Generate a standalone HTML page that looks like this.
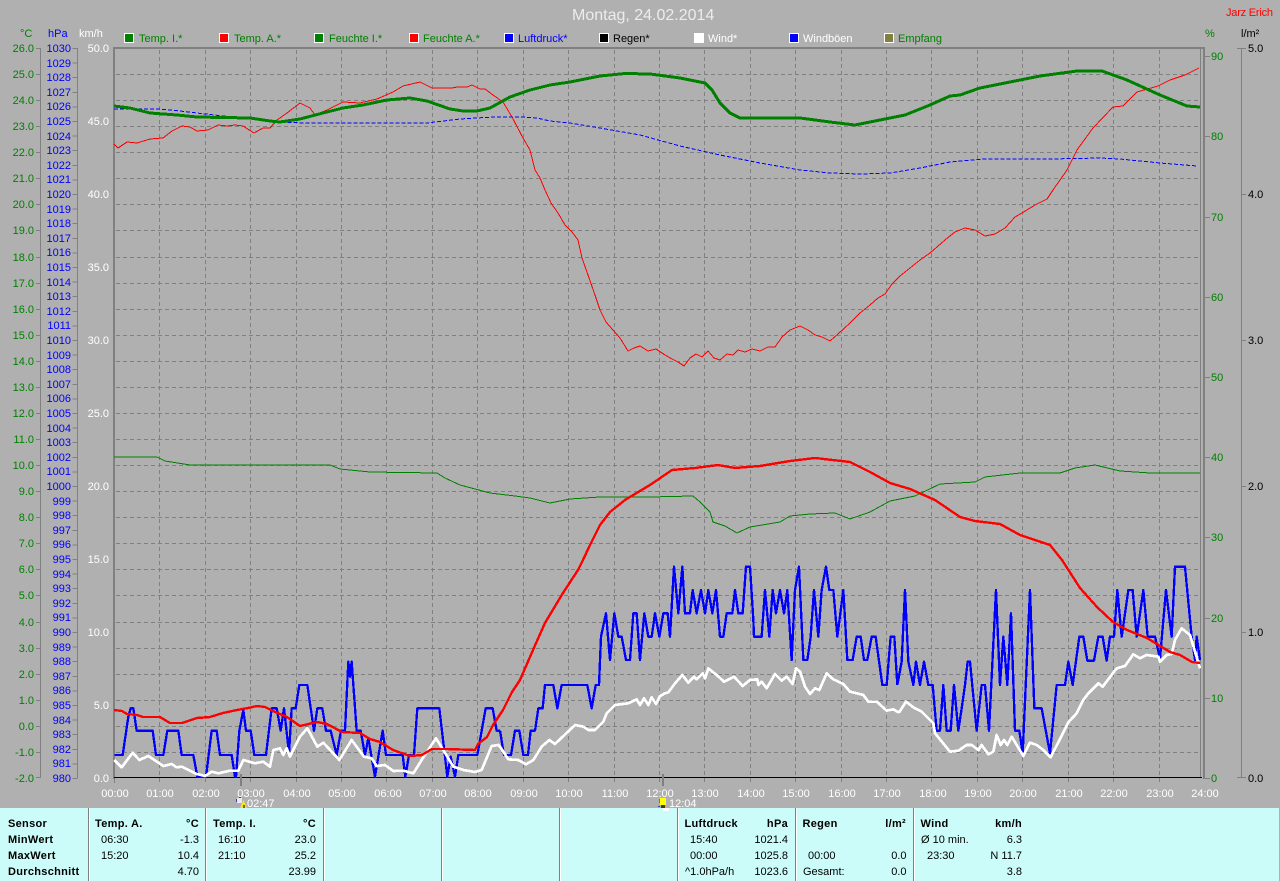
<!DOCTYPE html>
<html><head><meta charset="utf-8"><title>Wetter</title>
<style>
html,body{margin:0;padding:0;background:#b0b0b0;width:1280px;height:881px;overflow:hidden}
svg{display:block;position:absolute;left:0;top:0}
text{font-family:"Liberation Sans",Arial,sans-serif;font-size:11px}
.c{shape-rendering:crispEdges;fill:none}
.e{text-anchor:end}.m{text-anchor:middle}
.g{fill:#008000}.b{fill:#0000ff}.w{fill:#fff}.k{fill:#000}
.h{font-weight:bold;letter-spacing:.3px}
</style></head><body>
<svg width="1280" height="881" viewBox="0 0 1280 881" xmlns="http://www.w3.org/2000/svg">
<rect width="1280" height="881" fill="#b0b0b0"/>

<!-- grid -->
<path class="c" stroke="#808080" stroke-width="1" stroke-dasharray="4 3" d="M116 74.5H1200M116 100.5H1200M116 126.5H1200M116 152.5H1200M116 178.5H1200M116 204.5H1200M116 230.5H1200M116 257.5H1200M116 283.5H1200M116 309.5H1200M116 335.5H1200M116 361.5H1200M116 387.5H1200M116 413.5H1200M116 439.5H1200M116 465.5H1200M116 491.5H1200M116 517.5H1200M116 543.5H1200M116 569.5H1200M116 595.5H1200M116 622.5H1200M116 648.5H1200M116 674.5H1200M116 700.5H1200M116 726.5H1200M116 752.5H1200"/>
<path class="c" stroke="#808080" stroke-width="1" stroke-dasharray="4 3" d="M159.5 50V783M205.5 50V783M250.5 50V783M296.5 50V783M341.5 50V783M386.5 50V783M432.5 50V783M477.5 50V783M523.5 50V783M568.5 50V783M614.5 50V783M659.5 50V783M704.5 50V783M750.5 50V783M795.5 50V783M841.5 50V783M886.5 50V783M931.5 50V783M977.5 50V783M1022.5 50V783M1068.5 50V783M1113.5 50V783M1159.5 50V783"/>

<!-- frame -->
<path class="c" stroke="#808080" stroke-width="2" d="M113 48H1205M114 47V779M1204 47V779"/>
<path class="c" stroke="#808080" stroke-width="1" d="M1200.5 49V778M114.5 778V783"/>
<path class="c" stroke="#000" stroke-width="1" d="M114 777.5H1202"/>
<path class="c" stroke="#808080" stroke-width="2" d="M241 774V786M663 774V786"/>

<!-- left axes -->
<path class="c" stroke="#808080" stroke-width="1" d="M40.5 48V778M77.5 48V778M1241.5 48V778"/>
<path class="c" stroke="#808080" stroke-width="1" d="M36 48.5H41M36 74.5H41M36 100.5H41M36 126.5H41M36 152.5H41M36 178.5H41M36 204.5H41M36 230.5H41M36 257.5H41M36 283.5H41M36 309.5H41M36 335.5H41M36 361.5H41M36 387.5H41M36 413.5H41M36 439.5H41M36 465.5H41M36 491.5H41M36 517.5H41M36 543.5H41M36 569.5H41M36 595.5H41M36 622.5H41M36 648.5H41M36 674.5H41M36 700.5H41M36 726.5H41M36 752.5H41M36 777.5H41"/>
<line class="c" x1="75" y1="48" x2="75" y2="779" stroke="#808080" stroke-width="5" stroke-dasharray="1 13.6"/>
<!-- right axes ticks -->
<path class="c" stroke="#808080" stroke-width="1" d="M1205 56.5H1210M1205 136.5H1210M1205 217.5H1210M1205 297.5H1210M1205 377.5H1210M1205 457.5H1210M1205 537.5H1210M1205 618.5H1210M1205 698.5H1210M1205 778.5H1210"/>
<path class="c" stroke="#808080" stroke-width="1" d="M1237 48.5H1246M1242 194.5H1246M1242 340.5H1246M1242 486.5H1246M1242 632.5H1246M1237 777.5H1246"/>

<!-- thin curves -->
<polyline class="c" stroke="#008000" stroke-width="1" points="114,457 157,457 165,461 190,465 330,465 340,469 370,472 437,473 445,478 460,485 475,489 490,493 515,496 530,498 550,503 570,499 600,497 650,497 693,496 700,502 710,512 713,522 725,526 737,533 750,527 780,522 790,516 810,514 835,513 850,519 870,512 890,501 915,496 940,484 975,482 985,477 1020,473 1060,473 1075,468 1095,465 1120,471 1150,473 1200,473"/>
<polyline class="c" stroke="#0000ff" stroke-width="1" stroke-dasharray="4 2" points="114,109 158,109 180,111 197,113 223,116 250,119 277,122 307,123 377,123 427,123 460,119 493,117 523,117 537,118 550,121 570,123 600,128 640,135 680,146 720,155 760,163 800,170 830,173 860,174 890,173 920,168 950,162 985,159 1050,159 1100,158 1120,159 1160,163 1197,166"/>
<polyline class="c" stroke="#ff0000" stroke-width="1" points="114,144 118,148 127,142 137,143 150,139 163,138 172,131 182,126 190,127 197,131 208,130 218,125 227,126 235,125 243,126 254,133 263,128 270,128 277,120 287,113 300,103 310,108 315,115 327,110 343,102 360,103 377,99 393,92 403,86 420,82 432,88 452,88 457,87 467,87 472,85 480,89 485,89 493,95 503,102 512,117 523,138 530,150 535,170 540,178 545,190 551,203 558,213 565,225 572,232 578,240 582,258 588,275 595,295 600,310 606,322 613,330 620,338 628,351 634,348 640,346 648,351 656,349 665,355 672,359 678,362 684,366 690,358 696,354 702,357 708,351 714,358 720,360 727,354 733,355 738,350 745,352 752,349 760,351 768,347 775,347 782,337 790,330 800,326 808,330 815,335 822,337 830,341 838,334 850,323 860,313 870,305 878,298 885,294 892,284 900,276 910,268 920,260 930,253 945,240 955,232 965,228 975,230 985,236 995,234 1005,228 1015,217 1022,213 1035,205 1047,199 1053,190 1067,170 1077,150 1093,128 1113,107 1123,106 1137,92 1158,86 1170,80 1185,75 1199,68"/>
<!-- thick temp I -->
<polyline class="c" stroke="#008000" stroke-width="3" stroke-linejoin="round" points="114,106 130,108 150,113 177,115 197,117 250,118 270,121 280,122 300,119 323,113 343,108 363,105 387,100 410,98 427,101 450,109 463,111 477,111 490,108 510,97 530,90 550,85 570,82 600,76 625,73.5 650,74 680,78 705,83 712,90 720,103 730,113 740,118 770,118 800,118 830,122 855,125 880,120 905,115 930,105 950,96 960,95 980,88 1010,82 1040,76 1077,71 1102,71 1127,80 1160,95 1187,106 1200,107"/>

<!-- blue gusts -->
<g transform="translate(110 560) scale(.33333)" fill="none" stroke="#0000ff" stroke-width="7" stroke-linejoin="round" shape-rendering="crispEdges">
<polyline points="13,585 38,585 55,470 62,445 70,445 80,512 128,512 138,585 160,585 172,512 205,512 215,585 250,585 262,650 288,650 305,512 320,512 330,585 365,585 375,650 378,650 388,512 400,450 408,512 422,512 433,585 468,585 485,445 500,445 512,512 522,445 537,580 545,445 557,445 568,375 592,375 612,512 622,445 637,445 648,512 662,512 680,585 693,512 705,512 715,305 720,350 725,305 740,512 752,512 765,585 775,535 795,650 818,512 828,585 878,585 886,650 897,585 912,585 922,445 988,445 1012,650 1022,590 1035,650 1045,585 1102,585 1127,445 1148,445 1160,512 1170,512"/>
</g>
<g transform="translate(500 560) scale(.33333)" fill="none" stroke="#0000ff" stroke-width="7" stroke-linejoin="round" shape-rendering="crispEdges">
<polyline points="0,512 12,585 33,585 45,512 58,512 70,585 84,585 92,512 105,512 115,445 128,445 135,375 160,375 172,445 185,375 262,375 275,445 287,375 297,375 303,230 318,160 330,300 343,160 355,230 365,230 378,300 390,300 400,160 410,160 420,300 433,160 445,230 455,230 465,160 478,230 490,160 503,160 510,230 522,20 535,160 547,20 555,160 570,160 578,90 590,160 603,90 615,160 625,90 637,160 648,90 660,230 670,230 680,160 697,160 705,90 715,160 728,160 738,20 750,20 760,180 762,230 785,230 795,90 808,230 818,90 828,160 840,90 852,160 862,90 875,300 885,90 897,20 910,300 922,300 932,230 942,90 955,230 965,90 978,20 988,90 1000,90 1012,230 1030,90 1042,300 1058,300 1070,230 1082,230 1092,300 1102,300 1115,230 1127,230 1147,375 1160,375 1172,230 1183,230 1192,375"/>
</g>
<g transform="translate(880 560) scale(.33333)" fill="none" stroke="#0000ff" stroke-width="7" stroke-linejoin="round" shape-rendering="crispEdges">
<polyline points="52,375 65,305 75,90 85,305 100,375 108,305 120,375 132,305 145,375 158,375 170,512 180,512 190,375 200,512 212,512 222,375 235,512 245,445 255,375 263,305 270,305 290,512 305,375 315,375 327,512 348,90 360,375 370,230 382,375 393,160 405,512 418,512 428,580 450,90 463,445 485,445 510,580 530,375 555,375 565,305 578,375 598,230 610,230 622,302 642,302 655,230 668,230 680,302 690,230 702,230 712,90 725,230 745,90 758,90 770,230 790,90 803,230 825,230 840,295 858,90 875,230 885,20 915,20 935,230 945,300 950,230 960,300"/>
</g>

<!-- white wind -->
<g transform="translate(110 560) scale(.33333)" fill="none" stroke="#ffffff" stroke-width="8" stroke-linejoin="round" shape-rendering="crispEdges">
<polyline points="13,600 35,622 68,578 88,600 115,588 160,618 185,612 200,622 215,620 260,642 285,648 305,635 325,640 360,632 385,632 400,600 435,610 460,605 480,620 490,570 510,565 520,585 530,565 540,590 570,530 592,505 622,560 640,548 688,600 725,540 762,590 785,595 800,618 825,615 850,633 880,632 910,640 935,600 978,535 1000,570 1030,620 1060,630 1095,636 1115,630 1145,558 1165,555 1170,560"/>
</g>
<g transform="translate(500 560) scale(.33333)" fill="none" stroke="#ffffff" stroke-width="8" stroke-linejoin="round" shape-rendering="crispEdges">
<polyline points="0,560 25,598 55,600 78,613 100,600 125,560 148,540 165,552 225,495 250,500 265,510 285,510 310,485 320,460 345,435 385,430 410,418 420,435 432,415 445,435 455,412 468,432 480,408 495,400 505,397 525,370 547,345 565,368 582,350 590,358 608,340 615,355 625,325 650,345 672,365 702,350 728,378 750,360 772,358 775,375 785,365 800,385 825,342 845,362 860,350 878,372 888,325 900,335 915,380 930,402 945,385 958,390 980,340 1000,358 1030,372 1050,395 1090,405 1105,425 1130,425 1160,452 1180,448 1197,458"/>
</g>
<g transform="translate(880 560) scale(.33333)" fill="none" stroke="#ffffff" stroke-width="8" stroke-linejoin="round" shape-rendering="crispEdges">
<polyline points="57,458 78,425 100,442 125,455 160,490 165,520 210,575 235,572 260,555 275,555 295,570 305,555 325,583 340,575 350,525 362,555 372,540 382,555 395,530 430,588 450,548 470,555 490,570 512,592 565,487 590,460 610,420 625,400 655,370 668,380 710,325 735,318 760,283 780,295 800,285 835,290 840,305 860,285 875,282 885,240 905,205 930,225 960,325"/>
</g>

<!-- red thick humidity -->
<polyline class="c" stroke="#ff0000" stroke-width="2.4" stroke-linejoin="round" points="114,710 122,711 127,714 137,715 143,717 160,717 170,723 182,723 197,718 210,717 223,713 237,710 248,708 257,706 265,707 273,711 287,717 300,726 317,722 327,724 342,732 360,733 370,739 380,742 393,750 410,756 422,755 432,749 447,749 475,750 478,744 487,737 493,725 503,710 512,692 520,680 533,650 545,623 563,593 578,570 583,560 590,545 600,525 610,512 625,500 650,485 672,470 695,468 718,465 735,468 760,466 790,461 815,458 850,462 870,472 890,483 910,489 935,500 960,517 975,521 1000,524 1020,535 1050,545 1062,560 1080,588 1097,607 1113,622 1127,630 1147,638 1170,652 1180,655 1192,662 1200,663"/>

<!-- title -->
<text x="572" y="20" fill="#ececec" style="font-size:16px">Montag, 24.02.2014</text>
<text x="1226" y="16" fill="#ff0000" textLength="47">Jarz Erich</text>

<!-- legend -->
<g shape-rendering="crispEdges" stroke="#fff" stroke-width="1">
<rect x="124.5" y="33.5" width="9" height="9" fill="#008000"/>
<rect x="219.5" y="33.5" width="9" height="9" fill="#ff0000"/>
<rect x="314.5" y="33.5" width="9" height="9" fill="#008000"/>
<rect x="409.5" y="33.5" width="9" height="9" fill="#ff0000"/>
<rect x="504.5" y="33.5" width="9" height="9" fill="#0000ff"/>
<rect x="599.5" y="33.5" width="9" height="9" fill="#000"/>
<rect x="694.5" y="33.5" width="9" height="9" fill="#fff"/>
<rect x="789.5" y="33.5" width="9" height="9" fill="#0000ff"/>
<rect x="884.5" y="33.5" width="9" height="9" fill="#808040"/>
</g>
<text class="g" x="139" y="42">Temp. I.*</text>
<text class="g" x="234" y="42">Temp. A.*</text>
<text class="g" x="329" y="42">Feuchte I.*</text>
<text class="g" x="423" y="42">Feuchte A.*</text>
<text class="b" x="518" y="42">Luftdruck*</text>
<text class="k" x="613" y="42">Regen*</text>
<text class="w" x="708" y="42">Wind*</text>
<text class="w" x="803" y="42">Windböen</text>
<text class="g" x="898" y="42">Empfang</text>

<!-- axis headers -->
<text class="g" x="20" y="37">°C</text>
<text class="b" x="48" y="37">hPa</text>
<text class="w" x="79" y="37">km/h</text>
<text class="g" x="1205" y="37">%</text>
<text class="k" x="1241" y="37">l/m²</text>

<!-- temp labels -->
<g class="g" text-anchor="end">
<text x="34" y="52">26.0</text><text x="34" y="78">25.0</text><text x="34" y="104">24.0</text><text x="34" y="130">23.0</text><text x="34" y="156">22.0</text><text x="34" y="182">21.0</text><text x="34" y="208">20.0</text><text x="34" y="234">19.0</text><text x="34" y="261">18.0</text><text x="34" y="287">17.0</text><text x="34" y="313">16.0</text><text x="34" y="339">15.0</text><text x="34" y="365">14.0</text><text x="34" y="391">13.0</text><text x="34" y="417">12.0</text><text x="34" y="443">11.0</text><text x="34" y="469">10.0</text><text x="34" y="495">9.0</text><text x="34" y="521">8.0</text><text x="34" y="547">7.0</text><text x="34" y="573">6.0</text><text x="34" y="599">5.0</text><text x="34" y="626">4.0</text><text x="34" y="652">3.0</text><text x="34" y="678">2.0</text><text x="34" y="704">1.0</text><text x="34" y="730">0.0</text><text x="34" y="756">-1.0</text><text x="34" y="782">-2.0</text>
</g>
<!-- hPa labels -->
<g class="b" text-anchor="end">
<text x="71" y="52">1030</text><text x="71" y="67">1029</text><text x="71" y="81">1028</text><text x="71" y="96">1027</text><text x="71" y="110">1026</text><text x="71" y="125">1025</text><text x="71" y="140">1024</text><text x="71" y="154">1023</text><text x="71" y="169">1022</text><text x="71" y="183">1021</text><text x="71" y="198">1020</text><text x="71" y="213">1019</text><text x="71" y="227">1018</text><text x="71" y="242">1017</text><text x="71" y="256">1016</text><text x="71" y="271">1015</text><text x="71" y="286">1014</text><text x="71" y="300">1013</text><text x="71" y="315">1012</text><text x="71" y="329">1011</text><text x="71" y="344">1010</text><text x="71" y="359">1009</text><text x="71" y="373">1008</text><text x="71" y="388">1007</text><text x="71" y="402">1006</text><text x="71" y="417">1005</text><text x="71" y="432">1004</text><text x="71" y="446">1003</text><text x="71" y="461">1002</text><text x="71" y="475">1001</text><text x="71" y="490">1000</text><text x="71" y="505">999</text><text x="71" y="519">998</text><text x="71" y="534">997</text><text x="71" y="548">996</text><text x="71" y="563">995</text><text x="71" y="578">994</text><text x="71" y="592">993</text><text x="71" y="607">992</text><text x="71" y="621">991</text><text x="71" y="636">990</text><text x="71" y="651">989</text><text x="71" y="665">988</text><text x="71" y="680">987</text><text x="71" y="694">986</text><text x="71" y="709">985</text><text x="71" y="724">984</text><text x="71" y="738">983</text><text x="71" y="753">982</text><text x="71" y="767">981</text><text x="71" y="782">980</text>
</g>
<!-- km/h labels -->
<g class="w" text-anchor="end">
<text x="109" y="52">50.0</text><text x="109" y="125">45.0</text><text x="109" y="198">40.0</text><text x="109" y="271">35.0</text><text x="109" y="344">30.0</text><text x="109" y="417">25.0</text><text x="109" y="490">20.0</text><text x="109" y="563">15.0</text><text x="109" y="636">10.0</text><text x="109" y="709">5.0</text><text x="109" y="782">0.0</text>
</g>
<!-- % labels -->
<g class="g">
<text x="1211" y="60">90</text><text x="1211" y="140">80</text><text x="1211" y="221">70</text><text x="1211" y="301">60</text><text x="1211" y="381">50</text><text x="1211" y="461">40</text><text x="1211" y="541">30</text><text x="1211" y="622">20</text><text x="1211" y="702">10</text><text x="1211" y="782">0</text>
</g>
<!-- l/m2 labels -->
<g class="k">
<text x="1248" y="52">5.0</text><text x="1248" y="198">4.0</text><text x="1248" y="344">3.0</text><text x="1248" y="490">2.0</text><text x="1248" y="636">1.0</text><text x="1248" y="782">0.0</text>
</g>
<!-- hours -->
<g class="w" text-anchor="middle">
<text x="115" y="797">00:00</text><text x="160" y="797">01:00</text><text x="206" y="797">02:00</text><text x="251" y="797">03:00</text><text x="297" y="797">04:00</text><text x="342" y="797">05:00</text><text x="388" y="797">06:00</text><text x="433" y="797">07:00</text><text x="478" y="797">08:00</text><text x="524" y="797">09:00</text><text x="569" y="797">10:00</text><text x="615" y="797">11:00</text><text x="660" y="797">12:00</text><text x="705" y="797">13:00</text><text x="751" y="797">14:00</text><text x="796" y="797">15:00</text><text x="842" y="797">16:00</text><text x="887" y="797">17:00</text><text x="933" y="797">18:00</text><text x="978" y="797">19:00</text><text x="1023" y="797">20:00</text><text x="1069" y="797">21:00</text><text x="1114" y="797">22:00</text><text x="1160" y="797">23:00</text><text x="1205" y="797">24:00</text>
</g>
<text class="w" x="247" y="807">02:47</text>
<text class="w" x="669" y="807">12:04</text>

<!-- panel -->
<rect x="0" y="808" width="1279" height="73" fill="#ccfcf9"/>
<path class="c" stroke="#808080" stroke-width="1" d="M88.5 808V881M205.5 808V881M323.5 808V881M441.5 808V881M559.5 808V881M677.5 808V881M795.5 808V881M913.5 808V881"/>
<path class="c" stroke="#ffffff" stroke-width="1" d="M89.5 808V881M206.5 808V881M324.5 808V881M442.5 808V881M560.5 808V881M678.5 808V881M796.5 808V881M914.5 808V881"/>

<!-- marker icons (over panel edge) -->
<g shape-rendering="crispEdges">
<rect x="237" y="798" width="5" height="5" fill="#e8e8f8"/>
<rect x="236" y="799" width="1" height="3" fill="#3040a0"/>
<rect x="239" y="797" width="2" height="1" fill="#3040a0"/>
<polygon points="243.5,800 240,808 247,808" fill="#ffe800"/>
<rect x="243" y="805" width="2" height="3" fill="#806000"/>
<rect x="660" y="798" width="6" height="7" fill="#ffff00"/>
<rect x="661" y="805" width="4" height="3" fill="#404000"/>
<rect x="659" y="799" width="1" height="4" fill="#808000"/>
<rect x="663" y="808" width="6" height="3" fill="#fff"/>
<rect x="658" y="806" width="2" height="1" fill="#3040a0"/>
</g>

<!-- table -->
<g class="k">
<text class="h" x="8" y="827">Sensor</text>
<text class="h" x="8" y="843">MinWert</text>
<text class="h" x="8" y="859">MaxWert</text>
<text class="h" x="8" y="875">Durchschnitt</text>

<text class="h" x="95" y="827">Temp. A.</text>
<text class="h e" x="199" y="827">°C</text>
<text x="101" y="843">06:30</text><text class="e" x="199" y="843">-1.3</text>
<text x="101" y="859">15:20</text><text class="e" x="199" y="859">10.4</text>
<text class="e" x="199" y="875">4.70</text>

<text class="h" x="213" y="827">Temp. I.</text>
<text class="h e" x="316" y="827">°C</text>
<text x="218" y="843">16:10</text><text class="e" x="316" y="843">23.0</text>
<text x="218" y="859">21:10</text><text class="e" x="316" y="859">25.2</text>
<text class="e" x="316" y="875">23.99</text>

<text class="h" x="684.5" y="827">Luftdruck</text>
<text class="h e" x="788" y="827">hPa</text>
<text x="690" y="843">15:40</text><text class="e" x="788" y="843">1021.4</text>
<text x="690" y="859">00:00</text><text class="e" x="788" y="859">1025.8</text>
<text x="685" y="875">^1.0hPa/h</text><text class="e" x="788" y="875">1023.6</text>

<text class="h" x="802.5" y="827">Regen</text>
<text class="h e" x="906" y="827">l/m²</text>
<text x="808" y="859">00:00</text><text class="e" x="906.5" y="859">0.0</text>
<text x="803" y="875">Gesamt:</text><text class="e" x="906.5" y="875">0.0</text>

<text class="h" x="920.5" y="827">Wind</text>
<text class="h e" x="1022" y="827">km/h</text>
<text x="921" y="843">Ø 10 min.</text><text class="e" x="1022" y="843">6.3</text>
<text x="927" y="859">23:30</text><text class="e" x="1022" y="859">N 11.7</text>
<text class="e" x="1022" y="875">3.8</text>
</g>
</svg>
</body></html>
